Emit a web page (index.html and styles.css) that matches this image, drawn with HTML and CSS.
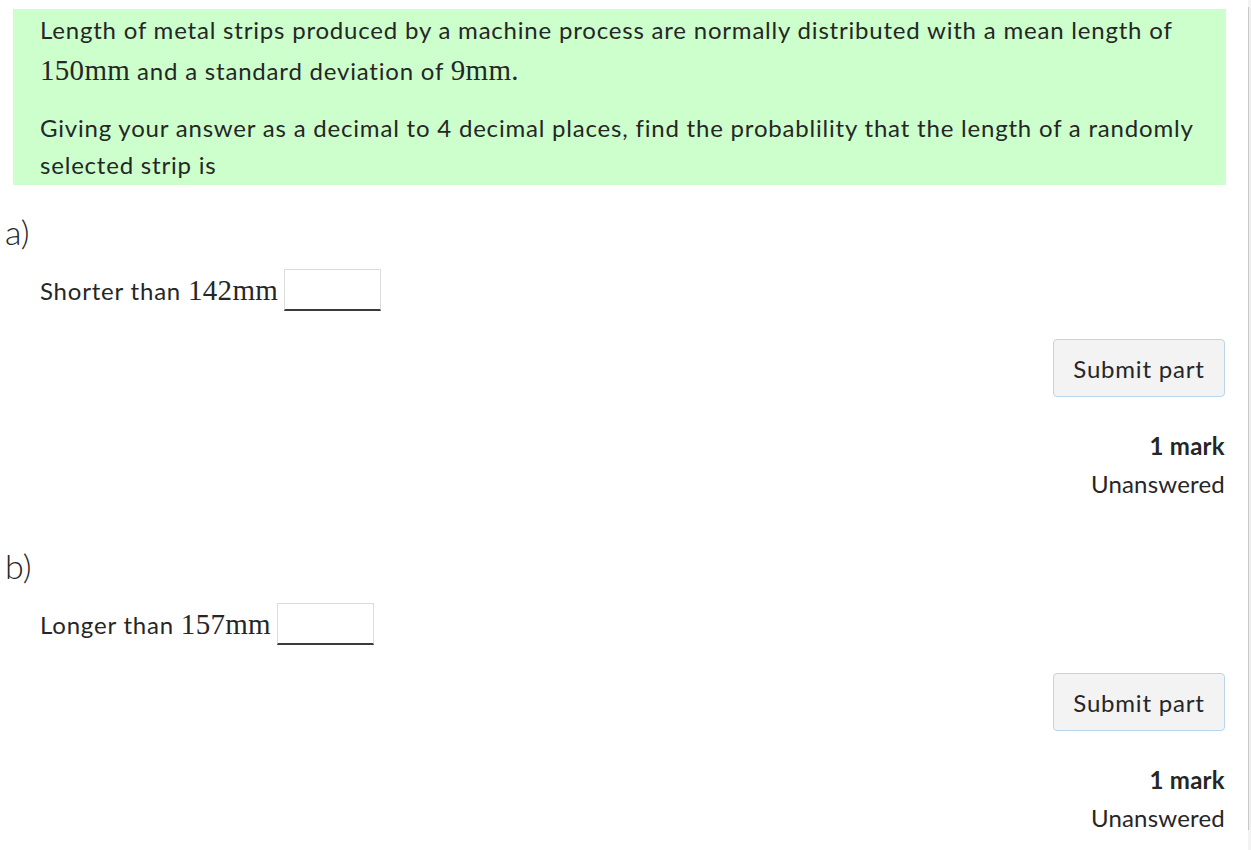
FILE: index.html
```html
<!DOCTYPE html>
<html lang="en">
<head>
<meta charset="utf-8">
<title>Question</title>
<link rel="stylesheet" href="styles.css">
</head>
<body>
<div class="page">
  <main class="question">
    <div class="statement">
      <p class="p1">Length of metal strips produced by a machine process are normally distributed with a mean length of <span class="math">150<span class="mrm">mm</span></span> and a standard deviation of <span class="math">9<span class="mrm">mm</span>.</span></p>
      <p class="p2">Giving your answer as a decimal to 4 decimal places, find the probablility that the length of a randomly selected strip is</p>
    </div>

    <section class="part part-a">
      <h3 class="part-label">a)</h3>
      <div class="prompt">
        <span>Shorter than <span class="math">142<span class="mrm">mm</span></span></span>
        <input class="answer" type="text" aria-label="answer a">
      </div>
      <div class="controls">
        <button class="submit" type="button">Submit part</button>
        <div class="marks">1 mark</div>
        <div class="status">Unanswered</div>
      </div>
    </section>

    <section class="part part-b">
      <h3 class="part-label">b)</h3>
      <div class="prompt">
        <span>Longer than <span class="math">157<span class="mrm">mm</span></span></span>
        <input class="answer" type="text" aria-label="answer b">
      </div>
      <div class="controls">
        <button class="submit" type="button">Submit part</button>
        <div class="marks">1 mark</div>
        <div class="status">Unanswered</div>
      </div>
    </section>
  </main>
  <div class="edge"><div class="edge-line"></div></div>
</div>
</body>
</html>
```

FILE: styles.css
```css
html, body {
  margin: 0;
  padding: 0;
  background: #ffffff;
  height: 850px;
  overflow: hidden;
}

body {
  font-family: "Source Sans Pro", Lato, "Liberation Sans", sans-serif;
  font-size: 24px;
  letter-spacing: 0.8px;
  color: #262626;
}

.page {
  display: flex;
  height: 850px;
}

.question {
  flex: 1;
  padding: 9px 22px 0 5px;
  min-width: 0;
}

.statement {
  background: #ccffcc;
  margin-left: 8px;
  padding: 0 27px 2px 27px;
}

.statement p {
  margin: 0;
}

.statement .p1 {
  line-height: 41px;
  margin-bottom: 18px;
}

.statement .p2 {
  line-height: 37px;
}

.math {
  font-family: "Liberation Serif", "DejaVu Serif", serif;
  font-size: 29px;
  letter-spacing: 0.3px;
  line-height: 1;
}

.part-label {
  margin: 26px 0 0 0;
  font-size: 34px;
  line-height: 42px;
  font-weight: 300;
  letter-spacing: 0;
}

.part-b .part-label {
  margin-top: 42px;
}

.prompt {
  display: flex;
  align-items: center;
  gap: 6px;
  margin: 16px 0 0 35px;
  height: 42px;
}

.answer {
  box-sizing: border-box;
  width: 97px;
  height: 42px;
  border: 1px solid #dcdcdc;
  border-bottom: 2px solid #3a3a3a;
  background: #ffffff;
  padding: 0 6px;
  font: inherit;
}

.controls {
  display: flex;
  flex-direction: column;
  align-items: flex-end;
  margin-right: 1px;
}

.submit {
  margin-top: 28px;
  box-sizing: border-box;
  width: 172px;
  height: 58px;
  border: 1px solid #b9d6ec;
  border-radius: 4px;
  background: #f3f3f3;
  color: #262626;
  font-family: inherit;
  font-size: 24px;
  letter-spacing: 0.8px;
  padding: 0;
}

.marks {
  margin-top: 30px;
  font-weight: 700;
  line-height: 38px;
  letter-spacing: 0.3px;
}

.status {
  line-height: 38px;
  letter-spacing: 0.2px;
}

.edge {
  width: 3px;
  background: #f3f3f3;
}

.edge-line {
  margin-top: 7px;
  height: 823px;
  border-left: 1px solid #c8c8c8;
  background: #efefef;
}
```
